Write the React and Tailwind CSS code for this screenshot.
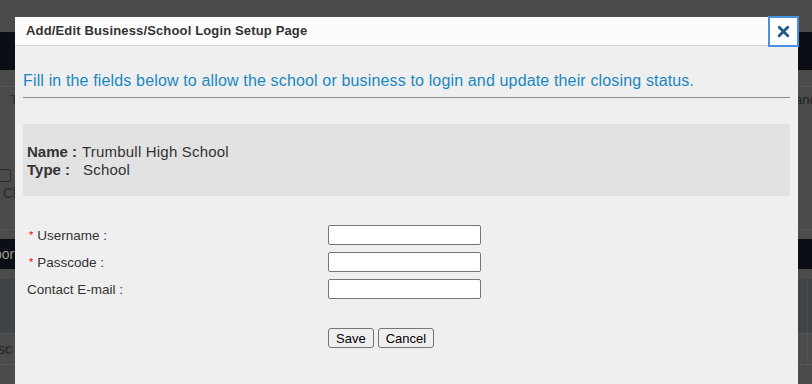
import { X } from 'lucide-react';

const font = { fontFamily: '"Liberation Sans", Arial, sans-serif' };

const BackgroundPage = () => (
  <div className="w-[812px] h-[384px] bg-[#4b4b4b] overflow-hidden flex flex-col text-[13px]" style={font}>
    <div className="h-[32px]" />
    <div className="h-[38px] bg-[#0b0e15]" />
    <div className="h-[16px]" />
    <div className="h-px bg-[#575757]" />
    <div className="h-[22px] flex justify-between items-end">
      <span className="ml-[10px] text-[#2c2c2c]">T</span>
      <span className="mr-[-4px] text-[#222]">anc</span>
    </div>
    <div className="h-[60px]" />
    <div className="h-[14px] flex">
      <div className="w-[12px] h-[13px] border border-[#2a2a2a] rounded-[2px] ml-[-1px] flex items-center justify-center text-[#2a4a6a] text-[11px] leading-none">✓</div>
    </div>
    <div className="h-[20px] flex items-center">
      <span className="ml-[3px] text-[#2a2a2a] text-[14px]">Cl</span>
    </div>
    <div className="h-[26px]" />
    <div className="h-px bg-[#555]" />
    <div className="h-[9px]" />
    <div className="h-[30px] bg-[#0b0e15] flex items-center">
      <span className="ml-[-6px] text-[#9a9a9a] text-[14px]">port</span>
    </div>
    <div className="h-[10px]" />
    <div className="h-[54px] bg-[#3f4447] flex justify-end">
      <div className="w-px bg-[#4d4d4d] mr-[4px]" />
    </div>
    <div className="h-px bg-[#555]" />
    <div className="h-[30px] flex items-center justify-between">
      <span className="ml-[-2px] text-[#222] text-[14px]">sc</span>
      <div className="w-px h-full bg-[#555] mr-[4px]" />
    </div>
    <div className="h-px bg-[#555]" />
  </div>
);

const Field = ({ label, required }) => (
  <>
    <label className="h-[20px] pt-[3px] flex items-center text-[13.5px] text-[#333]">
      {required && <span className="text-[#e00] text-[11px] leading-none mb-[3px] ml-[2px] mr-[4px]">*</span>}
      {label}
    </label>
    <input type="text" className="w-[153px] h-[20px] bg-white border border-[#767676] rounded-[2px] outline-none" />
  </>
);

const LoginSetupModal = () => (
  <div className="absolute left-[15px] top-[17px] w-[783px] h-[367px] bg-[#efefef] flex flex-col" style={font}>
    <div className="h-[29px] bg-[#fcfcfc] border-b border-[#d6d6d6] flex items-center pl-[11px]">
      <span className="text-[13px] tracking-[0.15px] font-bold text-[#333]">Add/Edit Business/School Login Setup Page</span>
    </div>
    <button className="absolute right-[-1px] top-[-1px] w-[31px] h-[31px] bg-white border-2 border-[#4a90e2] flex items-center justify-center">
      <X size={17} strokeWidth={4} className="text-[#1f5c8a]" />
    </button>

    <div className="px-[8px] flex flex-col">
      <p className="mt-[25px] text-[16px] tracking-[0.15px] leading-[20px] text-[#1a88bf]">
        Fill in the fields below to allow the school or business to login and update their closing status.
      </p>
      <div className="mt-[6px] h-px bg-[#8c8c8c]" />

      <div className="mt-[26px] h-[72px] bg-[#e2e2e2] pt-[19px] pl-[4px] text-[15px] leading-[18px] text-[#333]">
        <div>
          <span className="font-bold">Name :</span>
          <span className="ml-[5px] tracking-[0.2px]">Trumbull High School</span>
        </div>
        <div>
          <span className="font-bold">Type :</span>
          <span className="ml-[13px] tracking-[0.2px]">School</span>
        </div>
      </div>

      <div className="mt-[29px] pl-[4px] grid grid-cols-[301px_auto] auto-rows-[20px] gap-y-[7px] items-center">
        <Field label="Username :" required />
        <Field label="Passcode :" required />
        <Field label="Contact E-mail :" />
      </div>

      <div className="mt-[29px] pl-[305px] flex gap-[4px]">
        <button className="h-[20px] px-[7px] bg-[#efefef] border border-[#767676] rounded-[3px] text-[13px] text-black leading-none">Save</button>
        <button className="h-[20px] px-[7px] bg-[#efefef] border border-[#767676] rounded-[3px] text-[13px] text-black leading-none">Cancel</button>
      </div>
    </div>
  </div>
);

export default function App() {
  return (
    <div className="relative w-[812px] h-[384px] overflow-hidden">
      <BackgroundPage />
      <LoginSetupModal />
    </div>
  );
}
